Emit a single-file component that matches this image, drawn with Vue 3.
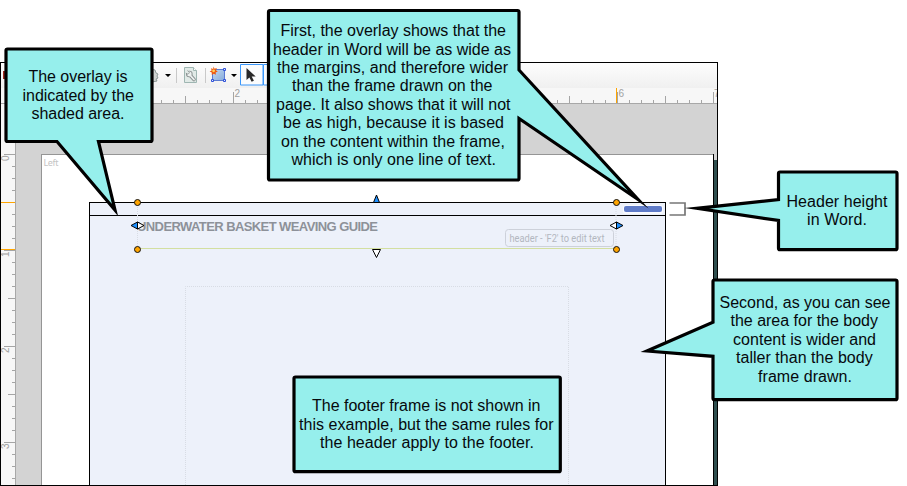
<script setup>
const hTicks = Array.from({ length: 59 }, (_, i) => ({
  x: 17 + i * 12,
  h: i % 8 === 2 ? 11 : i % 8 === 6 ? 7 : 3,
}))
const vTicks = Array.from({ length: 28 }, (_, i) => ({
  y: 154 + i * 12,
  w: i % 8 === 0 ? 11 : i % 8 === 4 ? 7 : 3,
}))
const handles = [[137.5, 202.5], [616.5, 202.5], [137.5, 249.5], [616.5, 249.5]]

// Each line: text, left edge, right edge, baseline
const callouts = [
  {
    path: 'M7.500 49H150.500Q152 49 152 50.500V140Q152 141.500 150.500 141.500H98.500L115 210L57 141.500H7.500Q6 141.500 6 140V50.500Q6 49 7.500 49Z',
    lines: [['The overlay is', 28.5, 127.5, 82], ['indicated by the', 22.5, 134, 100.5], ['shaded area.', 31.5, 124.5, 119]],
  },
  {
    path: 'M270 10.500H517.500Q519 10.500 519 12V70L638 199.500L519 118.500V178.500Q519 180 517.500 180H270Q268.500 180 268.500 178.500V12Q268.500 10.500 270 10.500Z',
    lines: [
      ['First, the overlay shows that the', 280.5, 506, 36], ['header in Word will be as wide as', 273, 511, 54.5],
      ['the margins, and therefore wider', 277, 508, 73], ['than the frame drawn on the', 292, 492.5, 91],
      ['page. It also shows that it will not', 276, 510.5, 109.5], ['be as high, because it is based', 283, 504, 128],
      ['on the content within the frame,', 281, 505, 146.5], ['which is only one line of text.', 291.5, 496, 165],
    ],
  },
  {
    path: 'M780 172H895.500Q897 172 897 173.500V248.200Q897 249.700 895.500 249.700H780Q778.500 249.700 778.500 248.200V220.500L697 208.300L778.500 199.500V173.500Q778.500 172 780 172Z',
    lines: [['Header height', 786.5, 887.5, 207], ['in Word.', 807, 867, 225.3]],
  },
  {
    path: 'M714.500 280H895.500Q897 280 897 281.500V398.200Q897 399.700 895.500 399.700H714.500Q713 399.700 713 398.200V356.300L647 351L713 322.300V281.500Q713 280 714.500 280Z',
    lines: [
      ['Second, as you can see', 719.5, 890.5, 307.7], ['the area for the body', 730.5, 878, 326.3],
      ['content is wider and', 733, 876, 344.7], ['taller than the body', 736, 872.7, 363.3], ['frame drawn.', 758, 852, 381.7],
    ],
  },
  {
    path: 'M295.500 377H558.800Q560.300 377 560.300 378.500V470.200Q560.300 471.700 558.800 471.700H295.500Q294 471.700 294 470.200V378.500Q294 377 295.500 377Z',
    lines: [
      ['The footer frame is not shown in', 312, 540.5, 411], ['this example, but the same rules for', 299, 553.5, 429.6],
      ['the header apply to the footer.', 320, 534, 448],
    ],
  },
]
</script>

<template>
  <div class="stage">
    <section class="window">
      <div class="toolbar">
        <svg width="270" height="25" viewBox="1 63 270 25">
          <rect x="3" y="71" width="2" height="8" fill="#a02a20" />
          <path d="M151 69l4 1 1 3 2 1-1 2 1 2-2 1 1 2-5 1z" fill="#cfd3d1" stroke="#8d9998" />
          <path d="M165 74h6l-3 3zM231 74h6l-3 3z" fill="#000" />
          <path d="M176.500 68v15M205.500 68v15" stroke="#c9c9c9" />
          <path d="M184.500 67.500h9l3 3v12h-12z" fill="#e1eae7" stroke="#9fb6b2" />
          <path d="M193.500 67.500v3h3" fill="#fff" stroke="#9fb6b2" />
          <path d="M188.500 73.500L194 79.500" stroke="#8a9090" stroke-width="3.600" stroke-linecap="round" />
          <circle cx="189.300" cy="74" r="3.300" fill="#8a9090" />
          <path d="M189.500 74.500L194 79.500" stroke="#eef2f1" stroke-width="1.800" stroke-linecap="round" />
          <circle cx="189.300" cy="74" r="2.400" fill="#eef2f1" />
          <path d="M187 69.500l2.800 3-1.500 1.700-3.300-2z" fill="#e1eae7" />
          <path d="M187.500 70.500l2 2.200-1.500 1.600-2.200-1.200" fill="none" stroke="#8a9090" stroke-width=".8" />
          <defs>
            <linearGradient id="frameFill" x1="0" y1="0" x2="1" y2="1"><stop stop-color="#c4d9f0" /><stop offset="1" stop-color="#86abdb" /></linearGradient>
          </defs>
          <rect x="212.500" y="69.500" width="12" height="11" fill="url(#frameFill)" stroke="#5a7ad2" />
          <path d="M223.500 68.500h2v2h-2zM223.500 79.500h2v2h-2zM211.500 79.500h2v2h-2z" fill="#dfe9ff" stroke="#2f50d8" />
          <path d="M213.500 66.500l1 2.300 2.400-.8-1 2.300 1.900 1.200-2.200 1 .4 2.300-2.200-1-2 1.300v-2.500l-2.200-1 2.100-1.200-.8-2.200 2.300.8z" fill="#ee5a12" />
          <circle cx="213.600" cy="70.800" r="1.400" fill="#ffd257" />
          <path d="M240.500 64.500h22.500v20.500h-22.500zM263.500 64.500h12v20.500h-12z" fill="#fbfcfd" stroke="#3a97fa" />
          <path d="M246.500 68v12l2.900-2.600 2.200 4.400 2.300-1.100-2.200-4.200h4z" fill="#292929" />
        </svg>
      </div>
      <svg class="ruler" width="716" height="16" viewBox="1 88 716 16">
        <rect x="1" y="88" width="716" height="15" fill="#f7f7f7" />
        <rect v-for="t in hTicks" :key="t.x" :x="t.x" :y="103 - t.h" width="1" :height="t.h" fill="#a5a5a5" />
        <rect x="1" y="103" width="716" height="1" fill="#a8a8a8" />
        <rect x="616" y="88" width="1" height="15" fill="#ffa500" />
        <text class="num" x="234.500" y="97">2</text>
        <text class="num" x="618.500" y="97">6</text>
        <text class="num" x="714" y="97">7</text>
      </svg>
      <div class="workspace">
        <svg width="716" height="381" viewBox="1 104 716 381">
          <rect x="1" y="104" width="14" height="381" fill="#f7f7f7" />
          <rect x="15" y="104" width="1" height="381" fill="#a8a8a8" />
          <rect v-for="t in vTicks" :key="t.y" :x="15 - t.w" :y="t.y" :width="t.w" height="1" fill="#a5a5a5" />
          <path d="M1 202.500h14M1 249.500h14" stroke="#ffa500" />
          <text class="num" transform="translate(9 161) rotate(-90)">0</text>
          <text class="num" transform="translate(9 257) rotate(-90)">1</text>
          <text class="num" transform="translate(9 353) rotate(-90)">2</text>
          <text class="num" transform="translate(9 449) rotate(-90)">3</text>

          <rect x="714" y="160" width="3" height="325" fill="#2f4f4f" />
          <rect x="41" y="154" width="673" height="331" fill="#959595" />
          <rect x="42" y="155" width="671" height="330" fill="#fff" />
          <rect x="713" y="154" width="1" height="331" fill="#000" />
          <text class="side" x="43.500" y="166" textLength="15">Left</text>

          <rect x="89" y="202" width="577" height="283" fill="#000" />
          <rect x="90" y="203" width="575" height="282" fill="#edf1fa" />
          <rect x="90" y="215" width="575" height="1" fill="#000" />
          <path d="M137.500 203v46M616 203v46M185.500 485V286.500H568.500V485" fill="none" stroke="#d8dce4" stroke-dasharray="1 1" />
          <path d="M141 248.500H613" stroke="#d3dfa0" />
          <text class="heading" x="137" y="231" textLength="241">UNDERWATER BASKET WEAVING GUIDE</text>
          <rect x="505.500" y="229.500" width="108" height="17" rx="3" fill="none" stroke="#cdd1da" />
          <text class="hint" x="509.500" y="242" textLength="95" lengthAdjust="spacingAndGlyphs">header - 'F2' to edit text</text>

          <rect x="623" y="205" width="40" height="9" rx="3" fill="#f9fbff" />
          <rect x="624" y="206" width="38" height="6" rx="2" fill="#5f7bc8" />
          <path d="M137.500 222L131 225.500L137.500 229Z" fill="#1e90ff" stroke="#000" />
          <path d="M137.500 222L144 225.500L137.500 229Z" fill="#fff" stroke="#000" />
          <path d="M616.500 222L610 225.500L616.500 229Z" fill="#fff" stroke="#000" />
          <path d="M616.500 222L623 225.500L616.500 229Z" fill="#1e90ff" stroke="#000" />
          <path d="M376.500 195L379.500 202.500H373.500Z" fill="#1e90ff" stroke="#000" />
          <path d="M372.500 249.500H380.500L376.500 257.500Z" fill="#fff" stroke="#000" />
          <circle v-for="(p, i) in handles" :key="i" :cx="p[0]" :cy="p[1]" r="3" fill="#ffa500" stroke="#111" />
        </svg>
      </div>
    </section>

    <svg class="annotations" width="907" height="486" viewBox="0 0 907 486">
      <path d="M669.500 203H685V215H669.500" fill="none" stroke="#777" stroke-width="1.700" />
      <g v-for="(c, i) in callouts" :key="i">
        <path class="bubble" :d="c.path" />
        <text v-for="l in c.lines" :key="l[0]" :x="l[1]" :y="l[3]" :textLength="l[2] - l[1]">{{ l[0] }}</text>
      </g>
    </svg>
  </div>
</template>

<style>
body { margin: 0; background: #fff; }
</style>

<style scoped>
.stage { position: relative; width: 907px; height: 486px; overflow: hidden; padding-top: 62px; box-sizing: border-box; background: #fff; }
.window { display: flex; flex-direction: column; width: 718px; height: 424px; box-sizing: border-box; border: 1px solid #000; background: #d3d3d3; }
.window svg { display: block; }
.toolbar { height: 25px; background: linear-gradient(#fdfdfd, #f0f0f0); }
.ruler { flex: none; }
.num { font: 10px "Liberation Sans", sans-serif; fill: #a0a0a0; }
.side { font: 9px "Noto Sans", sans-serif; fill: #c4c4c4; }
.heading { font: bold 13px "Liberation Sans", sans-serif; fill: #8d9199; }
.hint { font: 10px Roboto, sans-serif; fill: #b3b7c0; }
.annotations { position: absolute; left: 0; top: 0; }
.annotations text { font: 16px "Liberation Sans", sans-serif; fill: #06090d; }
.bubble { fill: #96efec; stroke: #000; stroke-width: 3.2; stroke-linejoin: miter; stroke-miterlimit: 20; }
</style>
